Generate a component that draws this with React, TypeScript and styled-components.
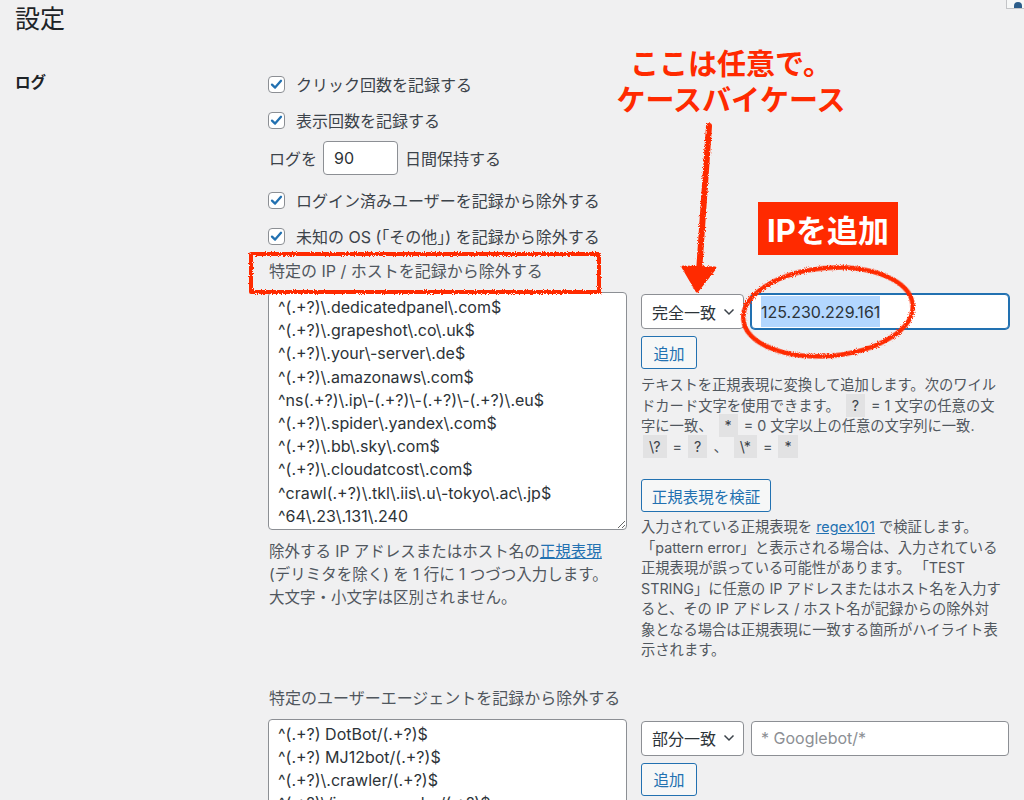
import styled, { createGlobalStyle } from "styled-components";

const RED = "#ff2a00";
const FONT = `Inter, "Noto Sans CJK JP", sans-serif`;

const GlobalStyle = createGlobalStyle`
  body {
    margin: 0;
    background: #f0f0f1;
    font-family: ${FONT};
    color: #3c434a;
  }
`;

const ipLines = [
  "^(.+?)\\.dedicatedpanel\\.com$",
  "^(.+?)\\.grapeshot\\.co\\.uk$",
  "^(.+?)\\.your\\-server\\.de$",
  "^(.+?)\\.amazonaws\\.com$",
  "^ns(.+?)\\.ip\\-(.+?)\\-(.+?)\\-(.+?)\\.eu$",
  "^(.+?)\\.spider\\.yandex\\.com$",
  "^(.+?)\\.bb\\.sky\\.com$",
  "^(.+?)\\.cloudatcost\\.com$",
  "^crawl(.+?)\\.tkl\\.iis\\.u\\-tokyo\\.ac\\.jp$",
  "^64\\.23\\.131\\.240",
];

const uaLines = [
  "^(.+?) DotBot/(.+?)$",
  "^(.+?) MJ12bot/(.+?)$",
  "^(.+?)\\.crawler/(.+?)$",
  "^(.+?)\\/jp.comcrawler/(.+?)$",
  "^(.+?) AhrefsBot/(.+?)$",
];

const Check = () => (
  <CheckBox>
    <svg width="17" height="17" viewBox="0 0 17 17">
      <path d="M4 8.6 L7.1 11.6 L13 4.8" fill="none" stroke="#2271b1" strokeWidth="2.3" strokeLinecap="round" strokeLinejoin="round" />
    </svg>
  </CheckBox>
);

const Chevron = () => (
  <svg width="12" height="8" viewBox="0 0 12 8">
    <path d="M1.5 1.5 L6 6 L10.5 1.5" fill="none" stroke="#3c434a" strokeWidth="1.5" />
  </svg>
);

const App = () => {
  return (
    <Page>
      <GlobalStyle />
      <CornerTab>
        <span />
      </CornerTab>
      <Heading>設定</Heading>
      <FormTable>
        <RowLabel>ログ</RowLabel>
        <Field>
          <Options>
            <CheckRow>
              <Check />
              クリック回数を記録する
            </CheckRow>
            <CheckRow>
              <Check />
              表示回数を記録する
            </CheckRow>
            <LogRow>
              ログを
              <NumberBox>90</NumberBox>
              日間保持する
            </LogRow>
            <CheckRow>
              <Check />
              ログイン済みユーザーを記録から除外する
            </CheckRow>
            <CheckRow>
              <Check />
              未知の OS (「その他」) を記録から除外する
            </CheckRow>
          </Options>

          <SubLabel>特定の IP / ホストを記録から除外する</SubLabel>
          <Split>
            <div>
              <ListArea $height={238} readOnly defaultValue={ipLines.join("\n")} />
              <LeftDesc>
                除外する IP アドレスまたはホスト名の<Link>正規表現</Link>
                <br />
                (デリミタを除く) を 1 行に 1 つづつ入力します。
                <br />
                大文字・小文字は区別されません。
              </LeftDesc>
            </div>
            <RightCol>
              <AddRow>
                <SelectBox>
                  完全一致
                  <Chevron />
                </SelectBox>
                <TextField $focused>
                  <Selected>125.230.229.161</Selected>
                </TextField>
              </AddRow>
              <Button $width={56}>追加</Button>
              <Help>
                テキストを正規表現に変換して追加します。次のワイル
                <br />
                ドカード文字を使用できます。 <Code>?</Code> = 1 文字の任意の文
                <br />
                字に一致、 <Code>*</Code> = 0 文字以上の任意の文字列に一致.
                <br />
                <Code>\?</Code> = <Code>?</Code> 、 <Code>\*</Code> = <Code>*</Code>
              </Help>
              <Button $width={130} $top={22}>正規表現を検証</Button>
              <Help $top={5}>
                入力されている正規表現を <Link>regex101</Link> で検証します。
                <br />
                「pattern error」と表示される場合は、入力されている
                <br />
                正規表現が誤っている可能性があります。 「TEST
                <br />
                STRING」に任意の IP アドレスまたはホスト名を入力す
                <br />
                ると、その IP アドレス / ホスト名が記録からの除外対
                <br />
                象となる場合は正規表現に一致する箇所がハイライト表
                <br />
                示されます。
              </Help>
            </RightCol>
          </Split>

          <SubLabel $top={26}>特定のユーザーエージェントを記録から除外する</SubLabel>
          <Split>
            <div>
              <ListArea $height={238} readOnly defaultValue={uaLines.join("\n")} />
            </div>
            <RightCol>
              <AddRow>
                <SelectBox>
                  部分一致
                  <Chevron />
                </SelectBox>
                <TextField>
                  <Placeholder>* Googlebot/*</Placeholder>
                </TextField>
              </AddRow>
              <Button $width={56}>追加</Button>
            </RightCol>
          </Split>
        </Field>
      </FormTable>

      <Callout>
        ここは任意で。
        <br />
        ケースバイケース
      </Callout>
      <Badge>IPを追加</Badge>
      <Marks width="1024" height="800" viewBox="0 0 1024 800">
        <defs>
          <filter id="rough" x="-5%" y="-5%" width="110%" height="110%">
            <feTurbulence type="fractalNoise" baseFrequency="0.9" numOctaves="2" seed="3" />
            <feDisplacementMap in="SourceGraphic" scale="3.5" />
          </filter>
        </defs>
        <g filter="url(#rough)" stroke={RED} fill="none" strokeLinecap="round" strokeLinejoin="round">
          <rect x="251" y="254" width="348" height="38" strokeWidth="4" />
          <path d="M709 126 C706 170 703 220 699 272" strokeWidth="6" />
          <path d="M683 267 L715 268 L697 291 Z" fill={RED} strokeWidth="3" />
          <ellipse cx="828" cy="312" rx="85" ry="44" transform="rotate(-5 828 312)" strokeWidth="4.5" />
        </g>
      </Marks>
    </Page>
  );
};

export default App;

const Page = styled.div`
  position: relative;
  width: 1024px;
  height: 800px;
  overflow: hidden;
  padding: 3px 0 0 15px;
  box-sizing: border-box;
`;

const CornerTab = styled.div`
  position: absolute;
  top: -7px;
  right: -6px;
  width: 22px;
  height: 14px;
  border: 1px solid #c3c4c7;
  background: #f6f7f7;
  display: flex;
  justify-content: center;
  align-items: flex-end;

  span {
    width: 8px;
    height: 6px;
    border-radius: 4px 4px 0 0;
    background: #2c5d8a;
  }
`;

const Heading = styled.h1`
  margin: 0;
  font-size: 25px;
  font-weight: 400;
  line-height: 33px;
  color: #1d2327;
`;

const FormTable = styled.div`
  display: grid;
  grid-template-columns: 253px 741px;
  margin-top: 36px;
`;

const RowLabel = styled.div`
  font-size: 15.5px;
  font-weight: 700;
  line-height: 24px;
  color: #1d2327;
  margin-top: -1px;
`;

const Field = styled.div`
  display: flex;
  flex-direction: column;
`;

const Options = styled.div`
  display: flex;
  flex-direction: column;
  gap: 12px;
`;

const CheckRow = styled.div`
  display: flex;
  align-items: center;
  gap: 11px;
  height: 24px;
  font-size: 16px;
  color: #3c434a;
`;

const CheckBox = styled.span`
  width: 17px;
  height: 17px;
  box-sizing: border-box;
  border: 1px solid #8c8f94;
  border-radius: 4px;
  background: #fff;
  display: flex;
  align-items: center;
  justify-content: center;

  svg {
    display: block;
    margin: -1px;
  }
`;

const LogRow = styled.div`
  display: flex;
  align-items: center;
  gap: 6px;
  height: 34px;
  margin: -3px 0 1px 1px;
  font-size: 16px;
  color: #3c434a;
`;

const NumberBox = styled.div`
  width: 75px;
  height: 34px;
  box-sizing: border-box;
  border: 1px solid #8c8f94;
  border-radius: 4px;
  background: #fff;
  padding: 0 10px;
  display: flex;
  align-items: center;
  font-size: 16px;
  color: #2c3338;
  margin-right: 1px;
`;

const SubLabel = styled.div<{ $top?: number }>`
  margin-top: ${(p) => p.$top ?? 12}px;
  margin-left: 1px;
  font-size: 16px;
  line-height: 22px;
  color: #50575e;
`;

const Split = styled.div`
  display: grid;
  grid-template-columns: 359px 368px;
  column-gap: 14px;
  align-items: start;
  margin-top: 10px;
`;

const ListArea = styled.textarea<{ $height: number }>`
  display: block;
  width: 359px;
  height: ${(p) => p.$height}px;
  box-sizing: border-box;
  margin: 0;
  padding: 3px 9px;
  border: 1px solid #8c8f94;
  border-radius: 4px;
  background: #fff;
  font-family: ${FONT};
  font-size: 16px;
  line-height: 23.2px;
  color: #2c3338;
  overflow: hidden;
  outline: none;
`;

const LeftDesc = styled.p`
  margin: 10px 0 0 1px;
  font-size: 15.5px;
  line-height: 23px;
  color: #50575e;
`;

const Link = styled.a`
  color: #2271b1;
  text-decoration: underline;
`;

const RightCol = styled.div`
  display: flex;
  flex-direction: column;
  align-items: flex-start;
  padding-top: 2px;
`;

const AddRow = styled.div`
  display: flex;
  gap: 7px;
  width: 100%;
`;

const SelectBox = styled.div`
  width: 103px;
  height: 35px;
  box-sizing: border-box;
  border: 1px solid #8c8f94;
  border-radius: 4px;
  background: #fff;
  padding: 0 8px 0 10px;
  display: flex;
  align-items: center;
  justify-content: space-between;
  font-size: 16px;
  color: #2c3338;
`;

const TextField = styled.div<{ $focused?: boolean }>`
  flex: 1;
  height: 35px;
  box-sizing: border-box;
  border: 1px solid ${(p) => (p.$focused ? "#2271b1" : "#8c8f94")};
  box-shadow: ${(p) => (p.$focused ? "0 0 0 1px #2271b1" : "none")};
  border-radius: 4px;
  background: #fff;
  padding: 1px 9px;
  display: flex;
  align-items: stretch;
  font-size: 16px;
  color: #2c3338;
`;

const Selected = styled.span`
  display: flex;
  align-items: center;
  background: #b3d7ff;
`;

const Placeholder = styled.span`
  display: flex;
  align-items: center;
  color: #8c8f94;
`;

const Button = styled.button<{ $width: number; $top?: number }>`
  width: ${(p) => p.$width}px;
  height: 33px;
  margin-top: ${(p) => p.$top ?? 7}px;
  padding: 0;
  border: 1px solid #2271b1;
  border-radius: 3px;
  background: #f6f7f7;
  color: #2271b1;
  font-family: ${FONT};
  font-size: 15.5px;
`;

const Help = styled.p<{ $top?: number }>`
  margin: ${(p) => p.$top ?? 6}px 0 0;
  font-size: 14.3px;
  line-height: 20.5px;
  color: #50575e;
  white-space: nowrap;
`;

const Code = styled.code`
  font-family: ${FONT};
  font-size: 14.3px;
  background: #e2e2e3;
  padding: 3px 6px 3px;
  margin: 0 2px;
  color: #3c434a;
`;

const Callout = styled.div`
  position: absolute;
  left: 596px;
  top: 47px;
  width: 270px;
  text-align: center;
  font-size: 29px;
  font-weight: 700;
  line-height: 36px;
  color: ${RED};
`;

const Badge = styled.div`
  position: absolute;
  left: 758px;
  top: 202px;
  width: 140px;
  height: 53px;
  background: ${RED};
  color: #fff;
  font-size: 31px;
  font-weight: 700;
  display: flex;
  align-items: center;
  justify-content: center;
`;

const Marks = styled.svg`
  position: absolute;
  left: 0;
  top: 0;
  pointer-events: none;
`;
